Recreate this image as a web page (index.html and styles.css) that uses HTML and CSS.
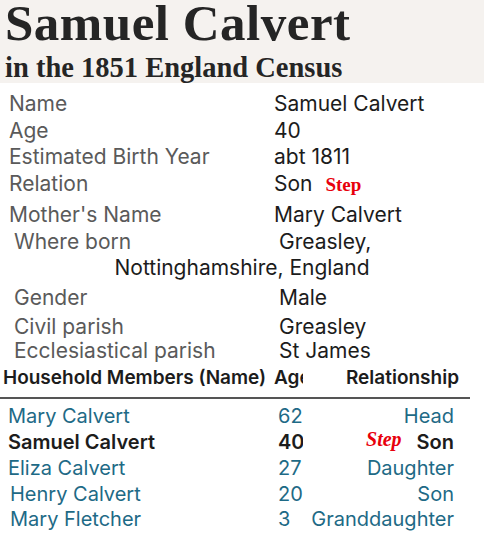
FILE: index.html
```html
<!DOCTYPE html>
<html lang="en">
<head>
<meta charset="utf-8">
<title>Samuel Calvert in the 1851 England Census</title>
<link rel="stylesheet" href="styles.css">
</head>
<body>
<header class="hero">
  <h1 class="title">Samuel Calvert</h1>
  <h2 class="subtitle">in the 1851 England Census</h2>
</header>

<section class="facts">
  <div class="group group-a">
    <div class="row"><span class="label">Name</span><span class="value">Samuel Calvert</span></div>
    <div class="row"><span class="label">Age</span><span class="value">40</span></div>
    <div class="row"><span class="label">Estimated Birth Year</span><span class="value">abt 1811</span></div>
    <div class="row"><span class="label">Relation</span><span class="value">Son <span class="step">Step</span></span></div>
    <div class="row row-gap"><span class="label">Mother's Name</span><span class="value">Mary Calvert</span></div>
  </div>
  <div class="group group-b">
    <div class="row"><span class="label">Where born</span><span class="value">Greasley,</span></div>
    <div class="row-center">Nottinghamshire, England</div>
    <div class="row row-gap"><span class="label">Gender</span><span class="value">Male</span></div>
    <div class="row row-gap-s"><span class="label">Civil parish</span><span class="value">Greasley</span></div>
    <div class="row row-tight"><span class="label">Ecclesiastical parish</span><span class="value">St James</span></div>
  </div>
</section>

<section class="household">
  <div class="hh-head">
    <span class="c-name">Household Members (Name)</span>
    <span class="c-age">Age</span>
    <span class="c-rel">Relationship</span>
  </div>
  <div class="hh-row"><span class="c-name">Mary Calvert</span><span class="c-age">62</span><span class="c-rel">Head</span></div>
  <div class="hh-row self"><span class="c-name">Samuel Calvert</span><span class="c-age">40</span><span class="c-rel"><span class="step step-i">Step</span>Son</span></div>
  <div class="hh-row"><span class="c-name">Eliza Calvert</span><span class="c-age">27</span><span class="c-rel">Daughter</span></div>
  <div class="hh-row shift"><span class="c-name">Henry Calvert</span><span class="c-age">20</span><span class="c-rel">Son</span></div>
  <div class="hh-row shift last"><span class="c-name">Mary Fletcher</span><span class="c-age">3</span><span class="c-rel">Granddaughter</span></div>
</section>
</body>
</html>
```

FILE: styles.css
```css
* { box-sizing: border-box; }

body {
  margin: 0;
  background: #ffffff;
  font-family: Inter, "Noto Sans", sans-serif;
  color: #1c1c1c;
}

.hero {
  height: 83px;
  background: #f5f2ef;
  padding-left: 5px;
}

.title {
  margin: 0;
  font-family: "Liberation Serif", serif;
  font-weight: bold;
  font-size: 51px;
  line-height: 46px;
  color: #252525;
  letter-spacing: 0.5px;
}

.subtitle {
  margin: 2px 0 0;
  font-family: "Liberation Serif", serif;
  font-weight: bold;
  font-size: 28.5px;
  line-height: 39px;
  color: #252525;
}

.facts {
  padding-top: 8px;
  font-size: 21px;
  line-height: 26.7px;
}

.row {
  display: grid;
  grid-template-columns: 265px auto;
}

.group-a { padding-left: 9px; }
.group-b { padding-left: 14px; }

.label { color: #5a5a5a; }
.value { color: #1c1c1c; }

.row-gap { margin-top: 3px; }
.row-gap-s { margin-top: 2px; }
.row-tight { margin-top: -2px; }

.row-center {
  text-align: center;
  color: #1c1c1c;
  margin-left: -14px;
}

.step {
  font-family: "Liberation Serif", serif;
  font-weight: bold;
  font-size: 19px;
  color: #e8000c;
  margin-left: 7px;
}

.step-i {
  font-style: italic;
  font-size: 20px;
  margin: 0 15px 0 0;
  position: relative;
  top: -3px;
}

.household {
  width: 470px;
  margin-top: 0;
}

.hh-head,
.hh-row {
  display: grid;
  grid-template-columns: 274px 29px 1fr;
  white-space: nowrap;
}

.hh-head {
  font-weight: 600;
  font-size: 19px;
  line-height: 26px;
  color: #1c1c1c;
  border-bottom: 2px solid #555555;
  padding-bottom: 6px;
  margin-bottom: 4px;
}

.hh-head .c-name { padding-left: 3px; }
.hh-head .c-rel { text-align: right; padding-right: 11px; }

.hh-row {
  font-size: 20px;
  line-height: 26px;
  color: #1e6a86;
}

.hh-row .c-name { padding-left: 8px; }
.hh-row.shift .c-name { padding-left: 10px; }
.hh-row.self { color: #1c1c1c; font-weight: 600; }
.hh-row.last { margin-top: -1px; }

.c-age {
  overflow: hidden;
  padding-left: 4px;
}
.hh-head .c-age { padding-left: 0; }

.hh-row .c-rel {
  text-align: right;
  padding-right: 16px;
}
```
